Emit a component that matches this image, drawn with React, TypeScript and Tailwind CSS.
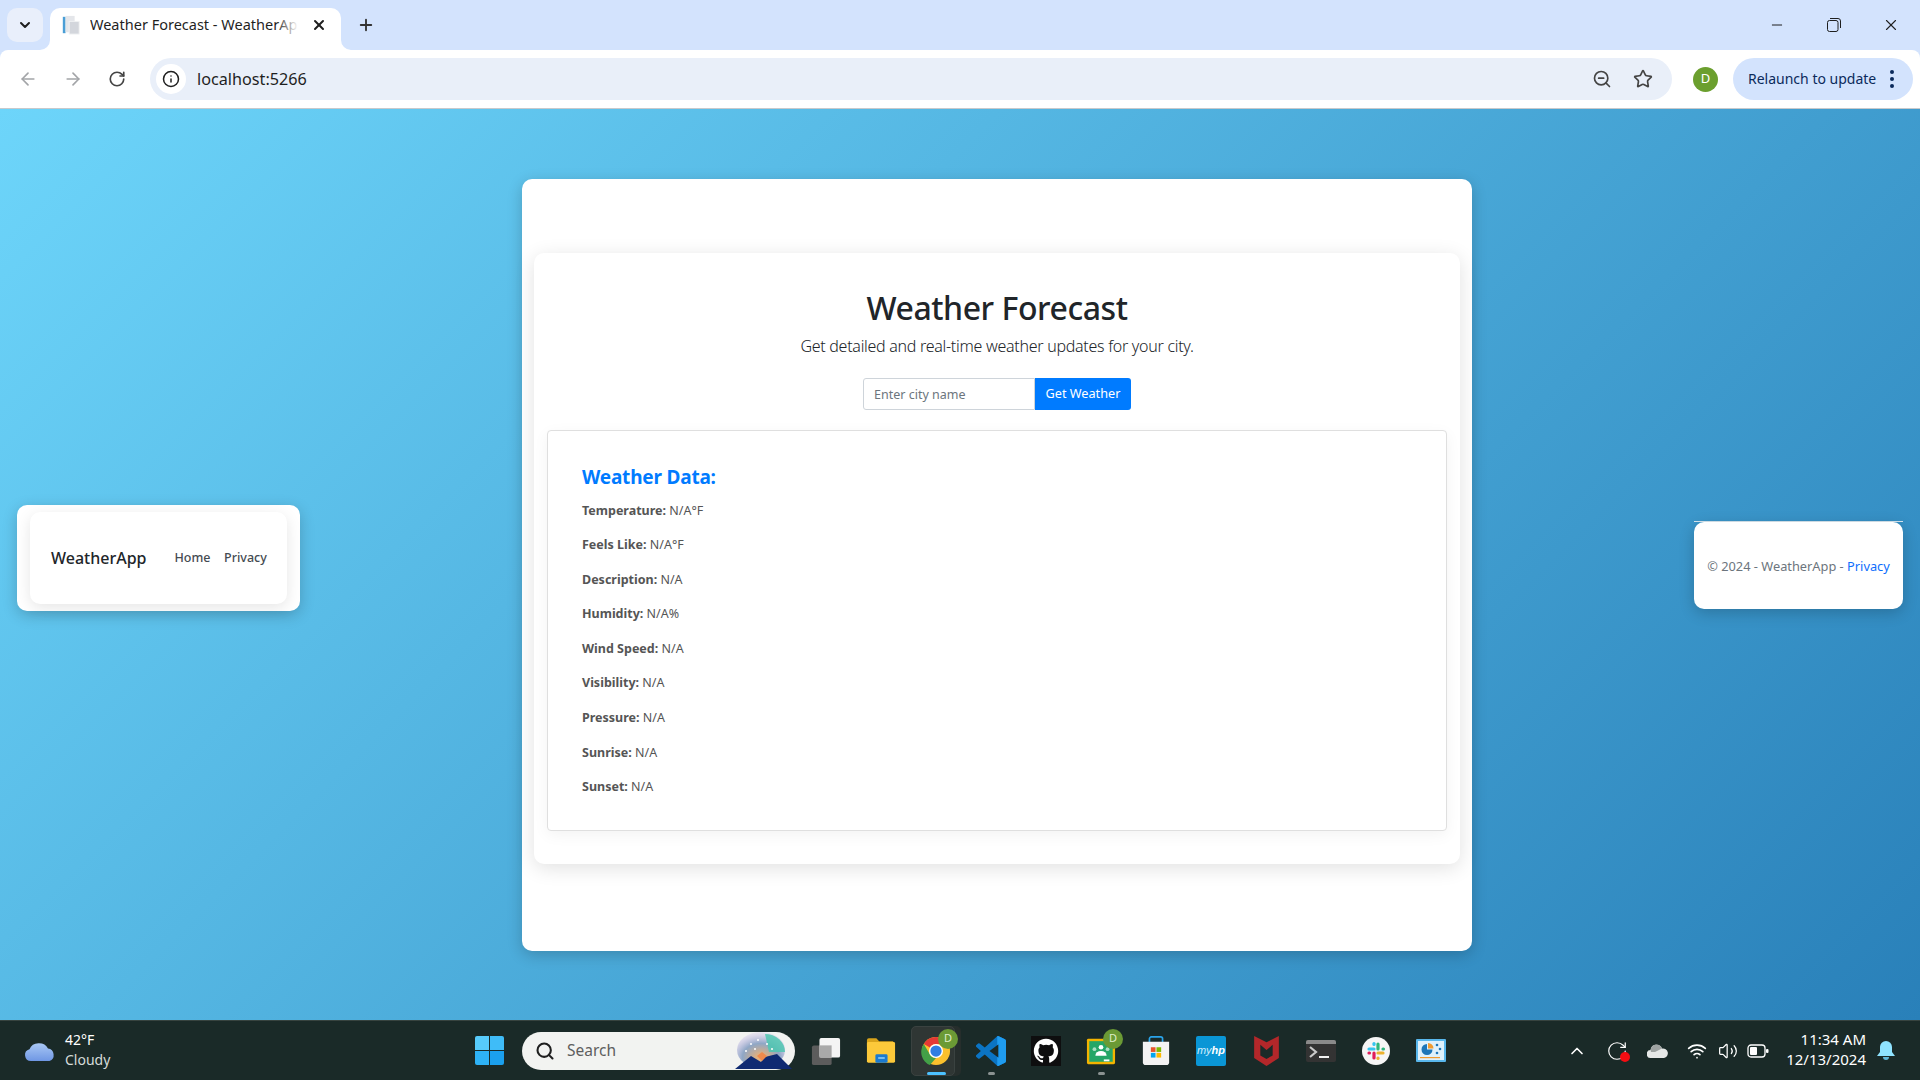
import React from 'react';
import {
  ArrowLeft,
  ArrowRight,
  ChevronDown,
  ChevronUp,
  Info,
  Minus,
  Plus,
  RotateCw,
  Search,
  Star,
  Volume2,
  Wifi,
  X,
  ZoomOut,
} from 'lucide-react';

const sans = 'font-["Noto_Sans","Open_Sans",sans-serif]';

const rows = [
  ['Temperature:', 'N/A°F'],
  ['Feels Like:', 'N/A°F'],
  ['Description:', 'N/A'],
  ['Humidity:', 'N/A%'],
  ['Wind Speed:', 'N/A'],
  ['Visibility:', 'N/A'],
  ['Pressure:', 'N/A'],
  ['Sunrise:', 'N/A'],
  ['Sunset:', 'N/A'],
];

const BrowserChrome = () => (
  <div className="shrink-0 bg-[#d3e3fd]">
    <div className="flex h-[50px]">
      <div className="ml-[7px] mt-[8px] flex h-[34px] w-[36px] items-center justify-center rounded-[10px] bg-[#e9effb]">
        <ChevronDown className="h-4 w-4 text-[#1f1f1f]" strokeWidth={3} />
      </div>
      <div className="relative ml-[7px] mt-[8px] flex h-[42px] w-[291px] items-center rounded-t-[10px] bg-white pb-[8px] pl-[11px] pr-[14px]">
        <svg viewBox="0 0 10 10" className="absolute bottom-0 left-[-10px] h-[10px] w-[10px]">
          <path d="M10 0V10H0A10 10 0 0 0 10 0Z" fill="#fff" />
        </svg>
        <svg viewBox="0 0 10 10" className="absolute bottom-0 right-[-10px] h-[10px] w-[10px]">
          <path d="M0 0V10H10A10 10 0 0 1 0 0Z" fill="#fff" />
        </svg>
        <svg viewBox="0 0 20 22" className="h-[20px] w-[20px] shrink-0">
          <rect x="1" y="2" width="3" height="18" fill="#4a9ed6" />
          <rect x="4" y="1" width="10" height="18" fill="#e4e6ea" />
          <rect x="8" y="7" width="11" height="14" fill="#d3d6dc" stroke="#f2f3f5" />
        </svg>
        <div className="relative ml-[9px] w-[208px] overflow-hidden">
          <span className={`block whitespace-nowrap text-[14.5px] text-[#1f1f1f] ${sans}`}>
            Weather Forecast - WeatherApp
          </span>
          <span className="absolute inset-y-0 right-0 w-[22px] bg-gradient-to-r from-transparent to-white" />
        </div>
        <X className="ml-auto h-4 w-4 text-[#1f1f1f]" strokeWidth={3} />
      </div>
      <div className="ml-[8px] mt-[8px] flex h-[34px] w-[34px] items-center justify-center">
        <Plus className="h-[18px] w-[18px] text-[#333]" strokeWidth={2.5} />
      </div>
      <div className="ml-auto flex items-start pr-[1px]">
        <div className="flex h-[50px] w-[57px] items-center justify-center">
          <Minus className="h-[16px] w-[16px] text-[#1f1f1f]" strokeWidth={1.5} />
        </div>
        <div className="flex h-[50px] w-[57px] items-center justify-center">
          <svg viewBox="0 0 14 14" className="h-[14px] w-[14px] fill-none stroke-[#1f1f1f]">
            <rect x="0.5" y="2.5" width="10.5" height="11" rx="2" />
            <path d="M3 0.5h8a2.5 2.5 0 0 1 2.5 2.500v7" />
          </svg>
        </div>
        <div className="flex h-[50px] w-[57px] items-center justify-center">
          <X className="h-[18px] w-[18px] text-[#1f1f1f]" strokeWidth={1.5} />
        </div>
      </div>
    </div>
    <div className="flex h-[59px] items-center rounded-t-[8px] border-b border-[#c7c9cc] bg-white">
      <ArrowLeft className="ml-[18px] h-[20px] w-[20px] text-[#a3a5a8]" strokeWidth={2} />
      <ArrowRight className="ml-[25px] h-[20px] w-[20px] text-[#a3a5a8]" strokeWidth={2} />
      <RotateCw className="ml-[25px] h-[18px] w-[18px] text-[#444]" strokeWidth={2.2} />
      <div className="ml-[24px] flex h-[42px] w-[1522px] items-center rounded-full bg-[#e9eff9] pl-[6px] pr-[19px]">
        <div className="flex h-[30px] w-[30px] items-center justify-center rounded-full bg-white">
          <Info className="h-[18px] w-[18px] text-[#1f1f1f]" strokeWidth={2} />
        </div>
        <span className={`ml-[11px] text-[16.2px] text-[#1f1f1f] ${sans}`}>localhost:5266</span>
        <ZoomOut className="ml-auto h-[20px] w-[20px] text-[#444]" strokeWidth={2} />
        <Star className="ml-[21px] h-[20px] w-[20px] text-[#444]" strokeWidth={2} />
      </div>
      <div className="ml-[21px] flex h-[25px] w-[25px] items-center justify-center rounded-full bg-[#6b9f2e] text-[13px] text-white">
        <span className={sans}>D</span>
      </div>
      <div className="ml-[15px] flex h-[42px] w-[180px] items-center rounded-full bg-[#d3e3fd] pb-[1px] pl-[15px]">
        <span className={`whitespace-nowrap text-[14px] text-[#0b2a5b] ${sans}`}>Relaunch to update</span>
        <div className="ml-[14px] flex flex-col gap-[3px]">
          <span className="h-[4px] w-[4px] rounded-full bg-[#0b2a5b]" />
          <span className="h-[4px] w-[4px] rounded-full bg-[#0b2a5b]" />
          <span className="h-[4px] w-[4px] rounded-full bg-[#0b2a5b]" />
        </div>
      </div>
    </div>
  </div>
);

const WeatherIcon = () => (
  <svg viewBox="0 0 32 22" className="h-[22px] w-[32px]">
    <defs>
      <linearGradient id="cloudFill" x1="0" y1="0" x2="0" y2="1">
        <stop offset="0" stopColor="#a9c8f5" />
        <stop offset="1" stopColor="#6f97e4" />
      </linearGradient>
    </defs>
    <path
      d="M7 21a6 6 0 0 1-1.500-11.800A10 9 0 0 1 24 8.500 6.500 6.500 0 0 1 25.500 21Z"
      fill="url(#cloudFill)"
    />
  </svg>
);

const StartIcon = () => (
  <div className="grid h-[29px] w-[29px] grid-cols-2 gap-[1px]">
    <span className="rounded-tl-[2px] bg-[#57cbfb]" />
    <span className="rounded-tr-[2px] bg-[#3fbcf8]" />
    <span className="rounded-bl-[2px] bg-[#2eb2f6]" />
    <span className="rounded-br-[2px] bg-[#1ba0ee]" />
  </div>
);

const SearchArt = () => (
  <svg viewBox="0 0 62 38" className="h-[38px] w-[62px]">
    <defs>
      <radialGradient id="burst" cx="0.5" cy="0.7" r="0.7">
        <stop offset="0" stopColor="#f6b26b" />
        <stop offset="0.55" stopColor="#8fa7c6" />
        <stop offset="1" stopColor="#c9b7e8" stopOpacity="0.2" />
      </radialGradient>
    </defs>
    <ellipse cx="30" cy="18" rx="24" ry="18" fill="url(#burst)" />
    <path d="M34 2a20 18 0 0 1 20 18l-16 0Z" fill="#4fc7b0" opacity="0.85" />
    <path d="M4 37 20 24l10 6 4-5 12-3 15 15Z" fill="#0f2a72" />
    <path d="M26 24l5-4 5 4-5 5Z" fill="#ef8a4c" />
    <g fill="#fff">
      <circle cx="20" cy="12" r="1" />
      <circle cx="27" cy="8" r="1" />
      <circle cx="15" cy="19" r="1" />
      <circle cx="36" cy="12" r="1" />
      <circle cx="41" cy="17" r="1" />
      <circle cx="24" cy="17" r="1" />
    </g>
  </svg>
);

const TaskView = () => (
  <svg viewBox="0 0 32 32" className="h-[30px] w-[30px]">
    <rect x="1" y="10" width="21" height="21" rx="2" fill="#5c5c5c" />
    <rect x="9" y="2" width="22" height="21" rx="2" fill="#f4f4f4" />
    <rect x="9" y="10" width="13" height="13" fill="#a9a9a9" />
  </svg>
);

const Explorer = () => (
  <svg viewBox="0 0 32 28" className="h-[27px] w-[30px]">
    <path d="M1 3a2 2 0 0 1 2-2h8l3 3h15v6H1Z" fill="#d9a41b" />
    <rect x="1" y="5" width="30" height="22" rx="1.500" fill="#fcc93a" />
    <rect x="10" y="18" width="13" height="9" rx="1.500" fill="#1a7ad0" />
    <rect x="13" y="21" width="7" height="2" fill="#7cc1f2" />
  </svg>
);

const ChromeIcon = () => (
  <svg viewBox="0 0 32 32" className="h-[30px] w-[30px]">
    <circle cx="16" cy="16" r="15" fill="#fbc02d" />
    <path d="M16 1A15 15 0 0 1 29 8.500H16a7.500 7.500 0 0 0-6.500 3.750L3 8.500A15 15 0 0 1 16 1Z" fill="#e53935" />
    <path d="M3 8.500 9.500 19.750A7.500 7.500 0 0 0 16 23.500L9.500 31A15 15 0 0 1 3 8.500Z" fill="#43a047" />
    <circle cx="16" cy="16" r="7.500" fill="#fff" />
    <circle cx="16" cy="16" r="6" fill="#2f7de1" />
  </svg>
);

const vsCodePath =
  'M23.15 2.587L18.21.21a1.494 1.494 0 0 0-1.705.29l-9.46 8.63-4.12-3.128a.999.999 0 0 0-1.276.057L.327 7.261A1 1 0 0 0 .326 8.74L3.899 12 .326 15.26a1 1 0 0 0 .001 1.479L1.65 17.94a.999.999 0 0 0 1.276.057l4.12-3.128 9.46 8.630a1.492 1.492 0 0 0 1.704.29l4.942-2.377A1.500 1.500 0 0 0 24 20.060V3.939a1.500 1.500 0 0 0-.85-1.352zm-5.146 14.861L10.826 12l7.178-5.448v10.896z';

const VsCode = () => (
  <svg viewBox="0 0 24 24" className="h-[30px] w-[30px]">
    <defs>
      <clipPath id="vsRight">
        <rect x="17" y="0" width="7" height="24" />
      </clipPath>
    </defs>
    <path d={vsCodePath} fill="#0b74c4" />
    <path d={vsCodePath} fill="#1f9cf0" clipPath="url(#vsRight)" />
  </svg>
);

const GitHubIcon = () => (
  <svg viewBox="0 0 32 32" className="h-[30px] w-[30px]">
    <rect width="32" height="32" fill="#0e0e0f" />
    <path
      d="M16 3C8.800 3 3 8.800 3 16c0 5.700 3.700 10.600 8.900 12.300.6.100.9-.3.9-.6v-2.200c-3.600.8-4.400-1.700-4.400-1.700-.6-1.500-1.400-1.900-1.400-1.900-1.200-.8.100-.8.100-.8 1.300.1 2 1.300 2 1.300 1.200 2 3.100 1.400 3.800 1.100.1-.8.500-1.400.9-1.700-2.900-.3-5.900-1.400-5.900-6.400 0-1.400.5-2.600 1.300-3.500-.1-.3-.6-1.700.1-3.400 0 0 1.100-.3 3.600 1.300a12.500 12.500 0 0 1 6.500 0c2.500-1.700 3.600-1.300 3.600-1.300.7 1.800.3 3.100.1 3.400.8.900 1.300 2.100 1.300 3.500 0 5-3 6.100-5.900 6.400.5.400.9 1.200.9 2.400v3.600c0 .3.200.7.900.6C25.300 26.600 29 21.700 29 16 29 8.800 23.200 3 16 3Z"
      fill="#fff"
    />
  </svg>
);

const Classroom = () => (
  <svg viewBox="0 0 32 32" className="h-[30px] w-[30px]">
    <rect x="1" y="3" width="30" height="27" rx="1.500" fill="#f4b400" />
    <rect x="3.500" y="5.500" width="25" height="22" fill="#25a667" />
    <circle cx="16" cy="12" r="2.500" fill="#fff" />
    <circle cx="9" cy="14" r="2" fill="#a8dcc0" />
    <circle cx="23" cy="14" r="2" fill="#a8dcc0" />
    <path d="M10 21a6 5 0 0 1 12 0Z" fill="#fff" />
    <rect x="19" y="25" width="6" height="2" fill="#fff" />
  </svg>
);

const Store = () => (
  <svg viewBox="0 0 32 32" className="h-[30px] w-[30px]">
    <path d="M9 7V3a2 2 0 0 1 2-2h10a2 2 0 0 1 2 2v4" fill="none" stroke="#2aa4ea" strokeWidth="1.800" />
    <path d="M2 6h28v22a3 3 0 0 1-3 3H5a3 3 0 0 1-3-3Z" fill="#f3f3f3" />
    <rect x="10.500" y="12" width="5" height="5" fill="#e8542a" />
    <rect x="16.500" y="12" width="5" height="5" fill="#7db900" />
    <rect x="10.500" y="18" width="5" height="5" fill="#04a5f0" />
    <rect x="16.500" y="18" width="5" height="5" fill="#ffb900" />
  </svg>
);

const MyHp = () => (
  <div className="flex h-[30px] w-[30px] items-center justify-center rounded-[2px] bg-[#0a96d6]">
    <span className="whitespace-nowrap font-['Liberation_Sans',sans-serif] text-[11px] italic text-[#cfeefc]">
      my<b className="text-white">hp</b>
    </span>
  </div>
);

const McAfee = () => (
  <svg viewBox="0 0 28 34" className="h-[30px] w-[27px]">
    <path fillRule="evenodd" d="M0 0 14 7 28 0V25L14 34 0 25ZM7 10V22L14 26 21 22V10L14 16Z" fill="#b3272a" />
  </svg>
);

const Terminal = () => (
  <div className="flex h-[22px] w-[30px] flex-col overflow-hidden rounded-[2px] bg-[#333]">
    <div className="h-[4px] bg-[#8a8a8a]" />
    <svg viewBox="0 0 30 18" className="h-[18px] w-[30px]">
      <path d="M4 3l6 5-6 5" fill="none" stroke="#c9c9c9" strokeWidth="2.200" />
      <rect x="13" y="12" width="10" height="2" fill="#f0f0f0" />
    </svg>
  </div>
);

const Slack = () => (
  <svg viewBox="0 0 28 28" className="h-[28px] w-[28px]">
    <circle cx="14" cy="14" r="14" fill="#f6f6f6" />
    <g strokeLinecap="round" strokeWidth="3.200" fill="none">
      <path d="M7 12h5" stroke="#36c5f0" />
      <path d="M12 6.500v1" stroke="#36c5f0" />
      <path d="M16 7v5" stroke="#2eb67d" />
      <path d="M21 12h.5" stroke="#2eb67d" />
      <path d="M16 16h5" stroke="#ecb22e" />
      <path d="M16 21v.5" stroke="#ecb22e" />
      <path d="M12 16v5" stroke="#e01e5a" />
      <path d="M7 16h.5" stroke="#e01e5a" />
    </g>
  </svg>
);

const LastApp = () => (
  <svg viewBox="0 0 30 23" className="h-[23px] w-[30px]">
    <rect width="30" height="23" rx="1" fill="#59b7ec" />
    <rect x="2" y="2" width="26" height="19" fill="#dff1fb" />
    <path d="M11 5a5.500 5.500 0 1 0 5.500 5.500H11Z" fill="#1d76b8" />
    <path d="M12 4v5.500h5.500A5.500 5.500 0 0 0 12 4Z" fill="#f09a2e" />
    <circle cx="21" cy="6" r="1.300" fill="#1d76b8" />
    <circle cx="24" cy="10" r="1.300" fill="#1d76b8" />
    <circle cx="21" cy="14" r="1.300" fill="#1d76b8" />
    <rect x="4" y="18" width="20" height="1.200" fill="#f09a2e" />
  </svg>
);

const Badge = () => (
  <span className={`absolute right-[-7px] top-[-7px] flex h-[20px] w-[20px] items-center justify-center rounded-full bg-[#6b9a35] text-[11px] text-[#dfeec9] ${sans}`}>
    D
  </span>
);

const TaskButton = ({
  children,
  badge,
  mark,
  active,
}: {
  children: React.ReactNode;
  badge?: boolean;
  mark?: string;
  active?: boolean;
}) => (
  <div className="relative flex h-[50px] w-[50px] items-center justify-center">
    {active && <span className="absolute inset-0 rounded-[5px] bg-[#262e2c]" />}
    {active && <span className="absolute inset-y-0 left-0 w-[44px] rounded-[5px] border border-[#3a4240] bg-[#2f3634]" />}
    <div className="relative flex items-center justify-center">
      {children}
      {badge && <Badge />}
    </div>
    {mark === 'on' && <span className="absolute bottom-[1px] h-[3px] w-[19px] rounded-full bg-[#4cc2ff]" />}
    {mark === 'off' && <span className="absolute bottom-[1px] h-[3px] w-[7px] rounded-full bg-[#8b9291]" />}
  </div>
);

const Taskbar = () => (
  <div className="flex h-[60px] shrink-0 items-center border-t border-[#37433f] bg-[#1a2a28] text-white">
    <div className="ml-[24px] flex w-[200px] items-center gap-[9px]">
      <WeatherIcon />
      <div className={`flex flex-col pb-[2px] text-[14px] leading-[20px] ${sans}`}>
        <span className="text-white">42°F</span>
        <span className="text-[#d5dbd9]">Cloudy</span>
      </div>
    </div>
    <div className="ml-[251px]">
      <StartIcon />
    </div>
    <div className="ml-[18px] flex h-[38px] w-[273px] items-center rounded-full bg-[#f2f3f1] pl-[13px]">
      <Search className="h-[20px] w-[20px] text-[#1f1f1f]" strokeWidth={2.5} />
      <span className={`ml-[12px] text-[15.5px] text-[#5e5e5e] ${sans}`}>Search</span>
      <div className="ml-auto mr-[2px]">
        <SearchArt />
      </div>
    </div>
    <div className="ml-[6px] flex gap-[5px]">
      <TaskButton><TaskView /></TaskButton>
      <TaskButton><Explorer /></TaskButton>
      <TaskButton active badge mark="on"><ChromeIcon /></TaskButton>
      <TaskButton mark="off"><VsCode /></TaskButton>
      <TaskButton><GitHubIcon /></TaskButton>
      <TaskButton badge mark="off"><Classroom /></TaskButton>
      <TaskButton><Store /></TaskButton>
      <TaskButton><MyHp /></TaskButton>
      <TaskButton><McAfee /></TaskButton>
      <TaskButton><Terminal /></TaskButton>
      <TaskButton><Slack /></TaskButton>
      <TaskButton><LastApp /></TaskButton>
    </div>
    <div className="ml-auto flex items-center pr-[25px]">
      <ChevronUp className="h-[20px] w-[20px] text-white" strokeWidth={2} />
      <div className="relative ml-[19px] h-[22px] w-[22px]">
        <RotateCw className="h-[22px] w-[22px] text-white" strokeWidth={1.3} />
        <span className="absolute bottom-0 right-[-2px] h-[10px] w-[10px] rounded-full bg-[#f30d12]" />
      </div>
      <svg viewBox="0 0 22 14" className="ml-[19px] h-[14px] w-[22px]">
        <path d="M4 14a4 4 0 0 1-.5-8A6 6 0 0 1 15 4.500 4.800 4.800 0 0 1 17 14Z" fill="#e6e8e7" />
        <path d="M4 8a4 4 0 0 1 11-3.500L8 8Z" fill="#9ea3a2" />
      </svg>
      <Wifi className="ml-[18px] h-[20px] w-[20px] text-white" strokeWidth={2} />
      <Volume2 className="ml-[11px] h-[20px] w-[20px] text-white" strokeWidth={1.5} />
      <svg viewBox="0 0 22 14" className="ml-[9px] h-[14px] w-[22px]">
        <rect x="1" y="1" width="17" height="12" rx="3" fill="none" stroke="#fff" strokeWidth="1.300" />
        <rect x="3" y="3" width="7" height="8" rx="1" fill="#fff" />
        <rect x="19" y="5" width="2.500" height="4" rx="1" fill="#fff" />
      </svg>
      <div className={`ml-[17px] flex flex-col items-end pb-[4px] text-[15px] leading-[20px] text-white ${sans}`}>
        <span>11:34 AM</span>
        <span>12/13/2024</span>
      </div>
      <svg viewBox="0 0 18 20" className="ml-[11px] h-[20px] w-[18px]">
        <path d="M9 0a6 6 0 0 1 6 6v5l3 4H0l3-4V6a6 6 0 0 1 6-6Z" fill="#8fe3ff" />
        <path d="M6 16h6a3 3 0 0 1-6 0Z" fill="#5fb6d8" />
      </svg>
    </div>
  </div>
);

const NavCard = () => (
  <div className="mb-[13px] h-[106px] w-[283px] rounded-[10px] bg-white px-[13px] pt-[7px] shadow-[0_4px_15px_rgba(0,0,0,0.2)]">
    <div className="flex h-[92px] items-center rounded-[10px] bg-white pl-[21px] shadow-[0_4px_15px_rgba(0,0,0,0.1)]">
      <span className={`text-[16px] font-medium text-[#212529] ${sans}`}>WeatherApp</span>
      <span className={`ml-[28px] pt-[1px] text-[12.5px] font-medium text-[#454b52] ${sans}`}>Home</span>
      <span className={`ml-[13.5px] pt-[1px] text-[12.5px] font-medium text-[#454b52] ${sans}`}>Privacy</span>
    </div>
  </div>
);

const MainCard = () => (
  <div className="h-[772px] w-[950px] rounded-[10px] bg-white px-[12px] pt-[74px] shadow-[0_4px_15px_rgba(0,0,0,0.2)]">
    <div className="flex h-[611px] flex-col items-center rounded-[10px] bg-white px-[13px] shadow-[0_4px_20px_rgba(0,0,0,0.12)]">
      <h1 className={`mt-[32px] text-[32px] font-medium leading-[46px] tracking-[-0.45px] text-[#212529] ${sans}`}>Weather Forecast</h1>
      <p className={`mt-[2px] text-[16px] font-light leading-[26px] tracking-[-0.28px] text-[#212529] ${sans}`}>
        Get detailed and real-time weather updates for your city.
      </p>
      <div className="mt-[19px] flex">
        <input
          placeholder="Enter city name"
          className={`h-[32px] w-[172px] rounded-l-[3px] border border-[#ced4da] bg-white px-[10px] pt-[2px] text-[12.5px] outline-none placeholder:text-[#6c757d] ${sans}`}
        />
        <button className={`h-[32px] w-[96px] rounded-r-[3px] bg-[#007bff] text-[12.7px] text-white ${sans}`}>Get Weather</button>
      </div>
      <div className="mt-[20px] h-[401px] w-full rounded-[4px] border border-[#dfdfdf] bg-white pl-[34px] pt-[32px] shadow-[0_4px_15px_rgba(0,0,0,0.05)]">
        <h2 className={`text-[19px] font-bold leading-[28px] tracking-[-0.2px] text-[#007bff] ${sans}`}>Weather Data:</h2>
        <div className="mt-[3px] flex flex-col">
          {rows.map(([label, value]) => (
            <p key={label} className={`h-[34.6px] text-[12.5px] leading-[34.6px] text-[#555] ${sans}`}>
              <b className="font-bold">{label}</b> {value}
            </p>
          ))}
        </div>
      </div>
    </div>
  </div>
);

const FooterCard = () => (
  <div className="flex w-[209px] flex-col">
    <div className="h-[1px] bg-[#d8e6ef]" />
    <div className="flex h-[87px] items-center justify-center rounded-[10px] bg-white pt-[3px] shadow-[0_4px_15px_rgba(0,0,0,0.2)]">
      <span className={`whitespace-nowrap text-[12.8px] text-[#6c757d] ${sans}`}>
        © 2024 - WeatherApp - <a className="text-[#0d6efd]">Privacy</a>
      </span>
    </div>
  </div>
);

const App: React.FC = () => {
  return (
    <div className="flex h-screen w-full flex-col overflow-hidden">
      <BrowserChrome />
      <div className="flex min-h-0 flex-1 items-center justify-between bg-[linear-gradient(135deg,#6dd5fa,#2980b9)] px-[17px]">
        <NavCard />
        <MainCard />
        <FooterCard />
      </div>
      <Taskbar />
    </div>
  );
};

export default App;
